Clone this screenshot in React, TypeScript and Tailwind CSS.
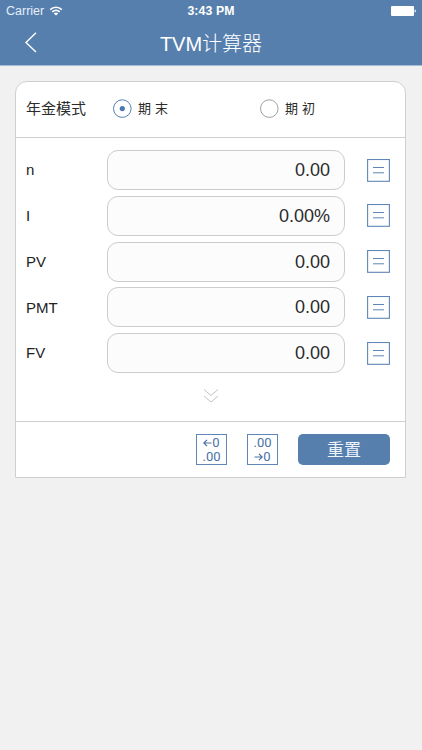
import { useState } from "react"

const fields = [
  { label: "n", value: "0.00" },
  { label: "I", value: "0.00%" },
  { label: "PV", value: "0.00" },
  { label: "PMT", value: "0.00" },
  { label: "FV", value: "0.00" },
]

function StatusBar() {
  return (
    <div className="relative flex h-[22px] items-center justify-between pl-[6px] pr-[6px] text-[12.5px] leading-[22px]">
      <div className="flex items-center gap-[5px]">
        <span className="text-[#e6eefa]">Carrier</span>
        <svg width="14" height="10" viewBox="0 0 13 10" fill="none" stroke="#fff" strokeWidth="1.6">
          <path d="M0.7 3.6C4 0.5 9 0.5 12.3 3.6" />
          <path d="M2.8 5.8C4.9 3.8 8.1 3.8 10.2 5.8" />
          <path d="M4.3 7.4C5.7 6.2 7.3 6.2 8.7 7.4L6.5 9.6Z" fill="#fff" stroke="none" />
        </svg>
      </div>
      <span className="absolute inset-x-0 text-center text-[12.3px] font-bold tracking-[0.1px]">3:43 PM</span>
      <svg width="26" height="10" viewBox="0 0 26 10" fill="#fff">
        <rect x="1" y="0" width="23" height="10" rx="1" />
        <path d="M24.6 3.4C26.3 3.8 26.3 6.2 24.6 6.6Z" />
      </svg>
    </div>
  )
}

function Radio({ label, checked, onClick }: { label: string; checked: boolean; onClick: () => void }) {
  return (
    <button className="flex items-center" onClick={onClick}>
      <svg width="20" height="20" viewBox="0 0 20 20" fill="none">
        <circle cx="10.3" cy="9.6" r="8.8" stroke={checked ? "#5580b0" : "#a0a0a2"} />
        {checked && <circle cx="10.3" cy="9.6" r="2.6" fill="#4b79ad" />}
      </svg>
      <span className="ml-[6px] text-[13px] leading-5 tracking-[4px]">{label}</span>
    </button>
  )
}

function EqualsButton() {
  return (
    <button>
      <svg width="23" height="23" viewBox="0 0 23 23" fill="none" stroke="#5f86b6">
        <rect x="0.6" y="0.5" width="21.8" height="21.8" strokeWidth="1.1" />
        <path d="M6 8.5H17M6 13.8H17" />
      </svg>
    </button>
  )
}

function Arrow({ right }: { right?: boolean }) {
  return (
    <svg width="9" height="8" viewBox="0 0 9 8" fill="none" stroke="currentColor" strokeWidth="1.2">
      {right ? <path d="M0.5 4H8M5 0.8L8.2 4L5 7.2" /> : <path d="M8.5 4H1M4 0.8L0.8 4L4 7.2" />}
    </svg>
  )
}

export default function App() {
  const [mode, setMode] = useState("end")

  return (
    <div className="h-[750px] w-[422px] overflow-hidden bg-[#f1f1f2] font-['Liberation_Sans','Noto_Sans_CJK_SC',sans-serif] text-[#2b2b2b]">
      <header className="h-[66px] border-b border-[#a9bdd7] bg-[#567fad] text-white">
        <StatusBar />
        <div className="grid h-[41px] grid-cols-[60px_1fr_60px] items-center">
          <button className="pl-[24px]">
            <svg width="14" height="22" viewBox="0 0 14 22" fill="none" stroke="#fff" strokeWidth="1.4">
              <path d="M12 0.8L2 10.4L12 20" />
            </svg>
          </button>
          <h1 className="pt-px text-center font-['Noto_Sans_CJK_SC',sans-serif] text-[20px] leading-[40px] font-light">
            <span className="font-['Liberation_Sans',sans-serif] text-[20px]">TVM</span>计算器
          </h1>
        </div>
      </header>

      <main className="ml-[15px] mt-[15px] h-[397px] w-[391px] rounded-t-[12px] border border-[#cfcfd3] bg-white">
        <div className="flex h-[56px] items-center border-b border-[#cfcfd3] pb-[2px] pl-[10px]">
          <span className="w-[86px] text-[15px] leading-5">年金模式</span>
          <div className="w-[147px]">
            <Radio label="期末" checked={mode === "end"} onClick={() => setMode("end")} />
          </div>
          <Radio label="期初" checked={mode === "begin"} onClick={() => setMode("begin")} />
        </div>

        <div className="flex h-[284px] flex-col border-b border-[#cfcfd3] pt-[12px]">
          <div className="flex flex-col gap-[5.8px]">
            {fields.map((field) => (
              <div key={field.label} className="flex h-[40px] items-center pl-[10px]">
                <span className="w-[81px] pt-px text-[15px] text-[#222]">{field.label}</span>
                <div className="flex h-[40px] w-[238px] items-center justify-end rounded-[11px] border border-[#cccccf] bg-[#fcfcfc] pt-px pr-[14px] text-[18px]">
                  {field.value}
                </div>
                <div className="ml-[22px] flex">
                  <EqualsButton />
                </div>
              </div>
            ))}
          </div>
          <svg className="ml-[187px] mt-[15px]" width="16" height="16" viewBox="0 0 16 16" fill="none" stroke="#c2c2c5">
            <path d="M1 1.5L8 7.5L15 1.5M1 8L8 14L15 8" />
          </svg>
        </div>

        <div className="flex h-[55px] items-center justify-end pr-[15px] font-['Roboto','Noto_Sans_CJK_SC',sans-serif]">
          <button className="flex h-[31px] w-[31px] flex-col items-center justify-center border border-[#5f86b6] text-[13px] leading-[14px] text-[#4673a8]">
            <span className="flex items-center"><Arrow />0</span>
            <span>.00</span>
          </button>
          <button className="ml-[20px] flex h-[31px] w-[31px] flex-col items-center justify-center border border-[#5f86b6] text-[13px] leading-[14px] text-[#4673a8]">
            <span>.00</span>
            <span className="flex items-center"><Arrow right />0</span>
          </button>
          <button className="ml-[20px] h-[31px] w-[92px] rounded-[5px] bg-[#567fad] text-[17px] leading-[30px] text-[#eef4fc]">
            重置
          </button>
        </div>
      </main>
    </div>
  )
}
